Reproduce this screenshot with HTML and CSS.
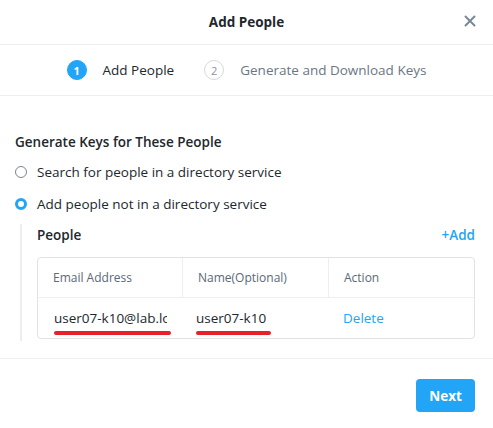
FILE: index.html
```html
<!DOCTYPE html>
<html>
<head>
<meta charset="utf-8">
<link rel="stylesheet" href="styles.css">
</head>
<body>
<div class="modal">
  <div class="header">
    <div class="title">Add People</div>
    <div class="close">
      <svg width="12" height="12" viewBox="0 0 12 12"><path d="M1.5 1.5 L10.5 10.5 M10.5 1.5 L1.5 10.5" stroke="#7a8798" stroke-width="2" stroke-linecap="round"/></svg>
    </div>
  </div>
  <div class="steps">
    <div class="step active"><span class="num">1</span><span class="label">Add People</span></div>
    <div class="step"><span class="num">2</span><span class="label">Generate and Download Keys</span></div>
  </div>
  <div class="content">
    <div class="section-title">Generate Keys for These People</div>
    <div class="radio"><span class="dot"></span><span>Search for people in a directory service</span></div>
    <div class="radio checked"><span class="dot"></span><span>Add people not in a directory service</span></div>
    <div class="people">
      <div class="people-head"><span class="people-title">People</span><span class="add">+Add</span></div>
      <div class="table">
        <div class="row head">
          <div class="cell">Email Address</div>
          <div class="cell">Name(Optional)</div>
          <div class="cell">Action</div>
        </div>
        <div class="row body">
          <div class="cell"><span class="val email">user07-k10@lab.local</span><span class="mark mark-email"></span></div>
          <div class="cell"><span class="val">user07-k10</span><span class="mark mark-name"></span></div>
          <div class="cell"><span class="link">Delete</span></div>
        </div>
      </div>
    </div>
  </div>
  <div class="footer">
    <button class="next">Next</button>
  </div>
</div>
</body>
</html>
```
FILE: styles.css
```css
* { box-sizing: border-box; }
body {
  margin: 0;
  background: #fff;
  font-family: "Open Sans", "Liberation Sans", sans-serif;
  color: #22272e;
  font-size: 13px;
}
.modal { width: 493px; height: 428px; display: flex; flex-direction: column; }
.header {
  height: 45px;
  border-bottom: 1px solid #eceef1;
  display: flex;
  align-items: center;
  justify-content: center;
  position: relative;
}
.title { font-weight: 700; font-size: 13.5px; color: #22272e; }
.close { position: absolute; right: 17px; top: 15px; width: 12px; height: 12px; display: flex; }
.steps {
  height: 51px;
  border-bottom: 1px solid #eceef1;
  display: flex;
  align-items: center;
  justify-content: center;
  gap: 30px;
  padding-left: 0;
}
.step { display: flex; align-items: center; gap: 16px; color: #6b7684; font-size: 13.5px; }
.step .num {
  width: 20px; height: 20px; border-radius: 50%;
  border: 1px solid #d4d9df;
  display: flex; align-items: center; justify-content: center;
  font-size: 11px; color: #8a95a3;
}
.step.active { color: #22272e; }
.step.active .num { background: #22a5f7; border-color: #22a5f7; color: #fff; font-weight: 700; }
.content { padding: 38px 18px 0 15px; flex: 1; }
.section-title { font-weight: 600; font-size: 13.5px; line-height: 17px; margin-bottom: 5px; }
.radio { display: flex; align-items: center; gap: 10px; height: 32px; font-size: 13.5px; }
.radio .dot {
  width: 12px; height: 12px; border-radius: 50%;
  border: 1px solid #7b8592;
  flex: none;
}
.radio.checked .dot { border: 3.5px solid #22a5f7; background: #fff; }
.people {
  margin-left: 5px;
  margin-top: 4px;
  border-left: 2px solid #eceef1;
  padding-left: 15px;
  padding-top: 0;
  padding-bottom: 2px;
}
.people-head { display: flex; justify-content: space-between; align-items: center; height: 22px; margin-bottom: 11px; }
.people-title { font-weight: 600; font-size: 13.5px; }
.add { color: #22a5f7; font-weight: 600; font-size: 13.5px; }
.table { border: 1px solid #dfe3e8; border-radius: 4px; }
.row { display: grid; grid-template-columns: 145px 146px 1fr; }
.row.head { height: 40px; border-bottom: 1px solid #eceef1; color: #5b6877; font-size: 12px; font-weight: 500; }
.row.head .cell { border-right: 1px solid #eceef1; padding-left: 15px; }
.row.head .cell:last-child { border-right: none; }
.row.body { height: 40px; font-size: 13.5px; }
.cell { display: flex; align-items: center; position: relative; padding-left: 15px; }
.row.body .cell:nth-child(1) { padding-left: 16px; }
.row.body .cell:nth-child(2) { padding-left: 13px; }
.row.body .cell:nth-child(3) { padding-left: 14px; }
.val { white-space: nowrap; }
.val.email { display: block; width: 113px; overflow: hidden; }
.link { color: #22a5f7; font-size: 13.5px; }
.mark { position: absolute; height: 4px; background: #e8202a; border-radius: 2px; bottom: 3px; }
.mark-email { left: 16px; width: 117px; }
.mark-name { left: 13px; width: 75px; }
.footer {
  height: 70px;
  border-top: 1px solid #eceef1;
  display: flex;
  justify-content: flex-end;
  align-items: flex-start;
  padding: 20px 18px 0 0;
}
.next {
  width: 59px; height: 33px;
  background: #22a5f7; color: #fff;
  border: none; border-radius: 4px;
  font-family: inherit; font-weight: 700; font-size: 13.5px;
}
```
